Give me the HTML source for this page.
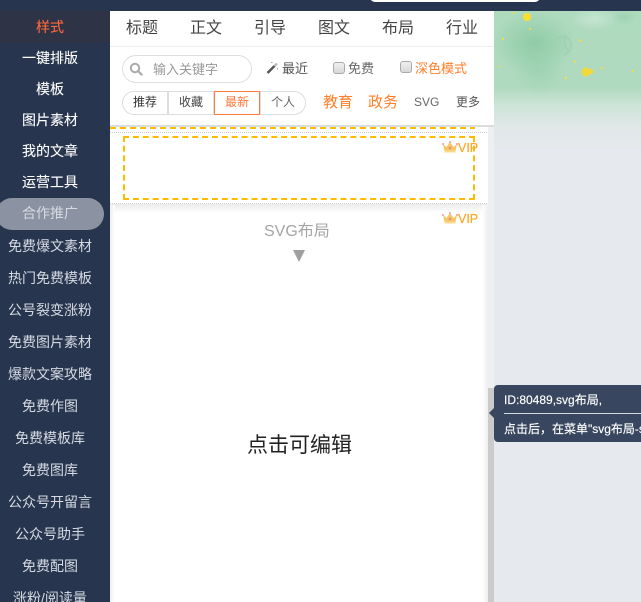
<!DOCTYPE html>
<html lang="zh">
<head>
<meta charset="utf-8">
<title>样式</title>
<style>
*{box-sizing:border-box;margin:0;padding:0}
html,body{width:641px;height:602px;overflow:hidden;background:#e6e9ed;font-family:"Liberation Sans","Noto Sans CJK SC",sans-serif}
.t{position:absolute;white-space:nowrap;line-height:20px;height:20px}
#top{position:absolute;left:0;top:0;width:641px;height:11px;background:#27354f}
#pill{position:absolute;left:370px;top:-8px;width:170px;height:10px;background:#fff;border-radius:6px}
#side{position:absolute;left:0;top:11px;width:110px;height:591px;background:#27354f;overflow:hidden}
#side div.i{position:absolute;left:0;width:100px;text-align:center;font-size:14px;line-height:20px;color:#fff;white-space:nowrap;-webkit-text-stroke:.1px currentColor}
#side div.f{color:#d6dbe3;-webkit-text-stroke:0}
#act{position:absolute;left:0;top:0;width:110px;height:32px;background:#2e3346}
#hz{position:absolute;left:-4px;top:187px;width:108px;height:32px;border-radius:16px;background:#8b93a2}
#panel{position:absolute;left:110px;top:11px;width:378px;height:591px;background:#fff}
#head{position:absolute;left:110px;top:11px;width:384px;height:116px;background:#fff;border-bottom:2px solid #ddd}
#tabline{position:absolute;left:110px;top:46px;width:384px;height:1px;background:#eee}
.tab{font-size:16px;color:#444;width:60px;text-align:center;top:19px}
.g{position:absolute;top:91px;height:24px;width:46px;border:1px solid #ddd;font-size:12px;line-height:21px;text-align:center;color:#444;background:#fff}
.cb{position:absolute;width:12px;height:12px;border:1px solid #aaa;border-radius:3px;background:linear-gradient(#f0f0f0,#d8d8d8)}
.or{color:#ff7f2a}
#scroll1{position:absolute;left:488px;top:127px;width:6px;height:261px;background:#eeeff0}
#scroll2{position:absolute;left:488px;top:388px;width:6px;height:214px;background:#cbcbcb}
#shadow{position:absolute;left:482px;top:205px;width:6px;height:397px;background:linear-gradient(90deg,#fff,#efefef)}
#sideshadow{position:absolute;left:110px;top:205px;width:5px;height:397px;background:linear-gradient(90deg,#efefef,#fff)}
#blockshadow{position:absolute;left:110px;top:204px;width:378px;height:9px;background:linear-gradient(#ebebeb,#fff)}
#dash0{position:absolute;left:110px;top:127px;width:365px;height:2px;background:repeating-linear-gradient(90deg,#ffbb00 0 6px,transparent 6px 10px)}
.dot{position:absolute;left:110px;width:378px;height:1px;background:repeating-linear-gradient(90deg,#ccc 0 1px,transparent 1px 2px)}
#box{position:absolute;left:123px;top:136px;width:352px;height:64px;border:2px dashed #ffbb00}
.vip{position:absolute;left:458px;font-size:12.500px;line-height:16px;color:#ffa726;-webkit-text-stroke:.2px #ffa726}
.crown{position:absolute;left:442px;width:16px;height:12px}
#tip{position:absolute;left:494px;top:385px;width:147px;height:57px;background:#38475f;border-radius:4px 0 0 4px;color:#fff;font-size:12px;overflow:hidden}
#arrow{position:absolute;left:489px;top:408px;width:0;height:0;border-top:5px solid transparent;border-bottom:5px solid transparent;border-right:5px solid #38475f}
</style>
</head>
<body>
<svg style="position:absolute;left:494px;top:11px" width="147" height="139" viewBox="0 0 147 139">
<defs>
<linearGradient id="fade" x1="0" y1="0" x2="0" y2="1">
<stop offset="0" stop-color="#aedabe"/><stop offset=".55" stop-color="#b0dabf"/>
<stop offset=".68" stop-color="#cde4d8"/><stop offset=".82" stop-color="#dfe8e7"/><stop offset="1" stop-color="#e6e9ed"/>
</linearGradient>
<radialGradient id="d"><stop offset="0" stop-color="#8fcba6"/><stop offset="1" stop-color="#8fcba6" stop-opacity="0"/></radialGradient>
<radialGradient id="l"><stop offset="0" stop-color="#c6e6d2"/><stop offset="1" stop-color="#c6e6d2" stop-opacity="0"/></radialGradient>
</defs>
<rect width="147" height="139" fill="url(#fade)"/>
<ellipse cx="40" cy="32" rx="42" ry="32" fill="url(#d)"/>
<ellipse cx="45" cy="60" rx="28" ry="24" fill="url(#d)" opacity=".45"/>
<ellipse cx="100" cy="8" rx="24" ry="12" fill="url(#l)"/>
<ellipse cx="130" cy="6" rx="12" ry="8" fill="url(#d)" opacity=".5"/>
<path d="M62 28q10-6 14 2t-6 14M72 25q-4 10 4 16" fill="none" stroke="#93cca8" stroke-width="1.500" opacity=".5"/>
<g fill="#fde02e">
<circle cx="33" cy="6" r="4"/><circle cx="92" cy="61" r="4.500" fill="#f1d93b"/><circle cx="97" cy="60.500" r="2.500" fill="#f1d93b"/>
<circle cx="20" cy="2" r="1"/><circle cx="36" cy="18" r="1"/><circle cx="9" cy="28" r="1"/><circle cx="86.500" cy="29.500" r="1.200"/>
<circle cx="81" cy="50.500" r="1"/><circle cx="108" cy="57" r="1"/><circle cx="139" cy="60" r="1"/><circle cx="72" cy="67" r="1.100"/><circle cx="5.500" cy="55.500" r=".9"/>
</g>
</svg>

<div id="top"></div><div id="pill"></div>

<div id="side">
<div id="act"></div><div id="hz"></div>
<div class="i" style="top:6px;color:#ff6a3c">样式</div>
<div class="i" style="top:37px">一键排版</div>
<div class="i" style="top:68px">模板</div>
<div class="i" style="top:99px">图片素材</div>
<div class="i" style="top:130px">我的文章</div>
<div class="i" style="top:161px">运营工具</div>
<div class="i f" style="top:192px">合作推广</div>
<div class="i f" style="top:225px">免费爆文素材</div>
<div class="i f" style="top:257px">热门免费模板</div>
<div class="i f" style="top:289px">公号裂变涨粉</div>
<div class="i f" style="top:321px">免费图片素材</div>
<div class="i f" style="top:353px">爆款文案攻略</div>
<div class="i f" style="top:385px">免费作图</div>
<div class="i f" style="top:417px">免费模板库</div>
<div class="i f" style="top:449px">免费图库</div>
<div class="i f" style="top:481px">公众号开留言</div>
<div class="i f" style="top:513px">公众号助手</div>
<div class="i f" style="top:545px">免费配图</div>
<div class="i f" style="top:577px">涨粉/阅读量</div>
</div>

<div id="panel"></div>
<div id="blockshadow"></div>
<div id="sideshadow"></div>
<div id="shadow"></div>
<div id="scroll1"></div><div id="scroll2"></div>

<div id="head"></div><div id="tabline"></div>
<div class="t tab" style="left:112px">标题</div>
<div class="t tab" style="left:176px">正文</div>
<div class="t tab" style="left:240px">引导</div>
<div class="t tab" style="left:304px">图文</div>
<div class="t tab" style="left:368px">布局</div>
<div class="t tab" style="left:432px">行业</div>

<div style="position:absolute;left:122px;top:55px;width:130px;height:28px;border:1px solid #ddd;border-radius:14px;background:#fff"></div>
<svg style="position:absolute;left:129px;top:62px" width="14" height="14" viewBox="0 0 14 14"><circle cx="6" cy="6" r="4.200" fill="none" stroke="#aaa" stroke-width="2"/><path d="M9 9l3.600 3.600" stroke="#aaa" stroke-width="2.200" stroke-linecap="round"/></svg>
<div class="t" style="left:153px;top:60px;font-size:13px;color:#999">输入关键字</div>

<svg style="position:absolute;left:266px;top:61px" width="13" height="13" viewBox="0 0 13 13"><path d="M1.500 12L8.500 5" stroke="#555" stroke-width="2.400"/><path d="M8.500 5l2.500-2.500" stroke="#bbb" stroke-width="2.400"/><path d="M5 1.500h1.500M11.500 7v1.500" stroke="#aaa" stroke-width="1"/></svg>
<div class="t" style="left:282px;top:59px;font-size:13px;color:#555">最近</div>
<div class="cb" style="left:333px;top:62px"></div>
<div class="t" style="left:348px;top:59px;font-size:13px;color:#666">免费</div>
<div class="cb" style="left:400px;top:61px"></div>
<div class="t or" style="left:415px;top:59px;font-size:13px">深色模式</div>

<div class="g" style="left:122px;border-radius:12px 0 0 12px;color:#333">推荐</div>
<div class="g" style="left:168px;color:#444">收藏</div>
<div class="g" style="left:260px;width:46px;border-radius:0 12px 12px 0;color:#666">个人</div>
<div class="g" style="left:214px;border-color:#ff7a3d;color:#ff7a3d">最新</div>

<div class="t or" style="left:323px;top:93px;font-size:15px">教育</div>
<div class="t or" style="left:368px;top:93px;font-size:15px">政务</div>
<div class="t" style="left:414px;top:92px;font-size:12px;color:#666">SVG</div>
<div class="t" style="left:456px;top:92px;font-size:12px;color:#555">更多</div>

<div id="dash0"></div>
<div class="dot" style="top:132px"></div>
<div id="box"></div>
<div class="dot" style="top:203px"></div>

<svg class="crown" style="top:141px" viewBox="0 0 16 12"><path d="M1 3l3.500 3L8 1l3.500 5L15 3l-1.500 7h-11z" fill="#f6c667"/><rect x="2.500" y="9.500" width="11" height="2" fill="#fbd98a"/><circle cx="8" cy="7" r="1.200" fill="#e88a8a"/><circle cx="1" cy="3" r="1" fill="#ee9a9a"/><circle cx="8" cy="1" r="1" fill="#ee9a9a"/><circle cx="15" cy="3" r="1" fill="#ee9a9a"/></svg>
<div class="vip" style="top:140px">VIP</div>
<svg class="crown" style="top:212px" viewBox="0 0 16 12"><path d="M1 3l3.500 3L8 1l3.500 5L15 3l-1.500 7h-11z" fill="#f6c667"/><rect x="2.500" y="9.500" width="11" height="2" fill="#fbd98a"/><circle cx="8" cy="7" r="1.200" fill="#e88a8a"/><circle cx="1" cy="3" r="1" fill="#ee9a9a"/><circle cx="8" cy="1" r="1" fill="#ee9a9a"/><circle cx="15" cy="3" r="1" fill="#ee9a9a"/></svg>
<div class="vip" style="top:211px">VIP</div>

<div class="t" style="left:264px;top:222px;font-size:16px;color:#a5a5a5">SVG布局</div>
<svg style="position:absolute;left:293px;top:250px" width="12" height="12" viewBox="0 0 12 12"><path d="M0 0h12L6 12z" fill="#a0a0a0"/></svg>
<div class="t" style="left:247px;top:434px;font-size:21px;line-height:24px;height:24px;color:#222">点击可编辑</div>

<div id="arrow"></div>
<div id="tip">
<div class="t" style="left:10px;top:5px;font-size:12px;-webkit-text-stroke:.15px #fff">ID:80489,svg布局,</div>
<div style="position:absolute;left:10px;top:28px;width:137px;height:1px;background:#d5d9e0"></div>
<div class="t" style="left:10px;top:34px;font-size:12px;-webkit-text-stroke:.15px #fff">点击后，在菜单"svg布局-said</div>
</div>
</body>
</html>
